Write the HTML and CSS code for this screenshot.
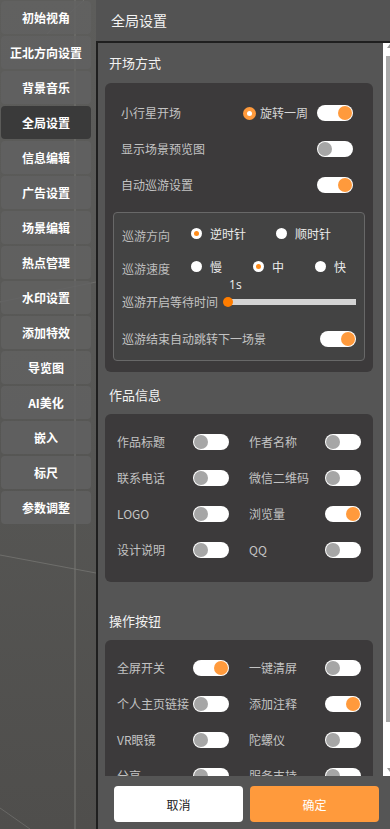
FILE: index.html
```html
<!DOCTYPE html>
<html lang="zh-CN">
<head>
<meta charset="utf-8">
<title>全局设置</title>
<link rel="stylesheet" href="styles.css">
</head>
<body>
<div class="app">
  <aside class="sidebar">
    <svg class="sidebar-bg" width="96" height="829" viewBox="0 0 96 829" xmlns="http://www.w3.org/2000/svg">
      <defs>
        <linearGradient id="bg" x1="0" y1="0" x2="0" y2="1">
          <stop offset="0" stop-color="#5d5d5b"/>
          <stop offset="0.5" stop-color="#575755"/>
          <stop offset="1" stop-color="#4f4e4c"/>
        </linearGradient>
      </defs>
      <rect width="96" height="829" fill="url(#bg)"/>
      <rect x="74" y="0" width="2" height="829" fill="#73736f" opacity="0.55"/>
      <line x1="47" y1="34" x2="84" y2="0" stroke="#7a7a77" stroke-width="1" opacity="0.6"/>
      <line x1="0" y1="302" x2="96" y2="282" stroke="#7a7a77" stroke-width="1" opacity="0.6"/>
      <line x1="0" y1="555" x2="96" y2="573" stroke="#7a7a77" stroke-width="1.2" opacity="0.7"/>
      <line x1="0" y1="808" x2="30" y2="829" stroke="#7a7a77" stroke-width="1" opacity="0.6"/>
    </svg>
    <nav class="menu">
      <div class="menu-item">初始视角</div>
      <div class="menu-item">正北方向设置</div>
      <div class="menu-item">背景音乐</div>
      <div class="menu-item active">全局设置</div>
      <div class="menu-item">信息编辑</div>
      <div class="menu-item">广告设置</div>
      <div class="menu-item">场景编辑</div>
      <div class="menu-item">热点管理</div>
      <div class="menu-item">水印设置</div>
      <div class="menu-item">添加特效</div>
      <div class="menu-item">导览图</div>
      <div class="menu-item">AI美化</div>
      <div class="menu-item">嵌入</div>
      <div class="menu-item">标尺</div>
      <div class="menu-item">参数调整</div>
    </nav>
  </aside>

  <section class="panel">
    <header class="panel-header">全局设置</header>
    <div class="panel-body">
      <div class="scroll-wrap">
        <div class="content">
          <h3 class="section-title s1">开场方式</h3>
          <div class="card card-open">
            <div class="row">
              <span class="label">小行星开场</span>
              <div class="row-right">
                <span class="radio-main"></span>
                <span class="opt-text main-opt">旋转一周</span>
                <span class="toggle on"><i></i></span>
              </div>
            </div>
            <div class="row">
              <span class="label">显示场景预览图</span>
              <span class="toggle"><i></i></span>
            </div>
            <div class="row">
              <span class="label">自动巡游设置</span>
              <span class="toggle on"><i></i></span>
            </div>

            <div class="cruise">
              <div class="c-row c-dir">
                <span class="c-label">巡游方向</span>
                <div class="opts">
                  <span class="opt wide"><span class="radio sel"></span><span class="opt-text">逆时针</span></span>
                  <span class="opt wide"><span class="radio"></span><span class="opt-text">顺时针</span></span>
                </div>
              </div>
              <div class="c-row c-speed">
                <span class="c-label">巡游速度</span>
                <div class="opts">
                  <span class="opt narrow"><span class="radio"></span><span class="opt-text">慢</span></span>
                  <span class="opt narrow"><span class="radio sel"></span><span class="opt-text">中</span></span>
                  <span class="opt narrow"><span class="radio"></span><span class="opt-text">快</span></span>
                </div>
              </div>
              <div class="c-row c-slider">
                <span class="label">巡游开启等待时间</span>
                <div class="slider">
                  <span class="slider-value">1s</span>
                  <span class="handle"></span>
                  <span class="track"></span>
                </div>
              </div>
              <div class="c-row c-end">
                <span class="label">巡游结束自动跳转下一场景</span>
                <span class="toggle on"><i></i></span>
              </div>
            </div>
          </div>

          <h3 class="section-title s2">作品信息</h3>
          <div class="card card-grid card-info">
            <div class="cell"><span class="label">作品标题</span><span class="toggle"><i></i></span></div>
            <div class="cell"><span class="label">作者名称</span><span class="toggle"><i></i></span></div>
            <div class="cell"><span class="label">联系电话</span><span class="toggle"><i></i></span></div>
            <div class="cell"><span class="label">微信二维码</span><span class="toggle"><i></i></span></div>
            <div class="cell"><span class="label">LOGO</span><span class="toggle"><i></i></span></div>
            <div class="cell"><span class="label">浏览量</span><span class="toggle on"><i></i></span></div>
            <div class="cell"><span class="label">设计说明</span><span class="toggle"><i></i></span></div>
            <div class="cell"><span class="label">QQ</span><span class="toggle"><i></i></span></div>
          </div>

          <h3 class="section-title s3">操作按钮</h3>
          <div class="card card-grid card-ops">
            <div class="cell"><span class="label">全屏开关</span><span class="toggle on"><i></i></span></div>
            <div class="cell"><span class="label">一键清屏</span><span class="toggle"><i></i></span></div>
            <div class="cell"><span class="label">个人主页链接</span><span class="toggle"><i></i></span></div>
            <div class="cell"><span class="label">添加注释</span><span class="toggle on"><i></i></span></div>
            <div class="cell"><span class="label">VR眼镜</span><span class="toggle"><i></i></span></div>
            <div class="cell"><span class="label">陀螺仪</span><span class="toggle"><i></i></span></div>
            <div class="cell"><span class="label">分享</span><span class="toggle"><i></i></span></div>
            <div class="cell"><span class="label">服务支持</span><span class="toggle"><i></i></span></div>
          </div>
        </div>
        <div class="scrollbar">
          <span class="sb-up"></span>
          <span class="sb-thumb"></span>
          <span class="sb-space"></span>
          <span class="sb-down"></span>
        </div>
      </div>
      <footer class="footer">
        <button class="btn btn-cancel">取消</button>
        <button class="btn btn-ok">确定</button>
      </footer>
    </div>
  </section>
</div>
</body>
</html>
```

FILE: styles.css
```css
* { box-sizing: border-box; }
html, body {
  margin: 0;
  padding: 0;
  width: 390px;
  height: 829px;
  overflow: hidden;
  background: #555555;
  font-family: "Noto Sans CJK SC", "Microsoft YaHei", "Noto Sans", sans-serif;
}
.app {
  display: flex;
  width: 390px;
  height: 829px;
}

/* ---------- sidebar ---------- */
.sidebar {
  position: relative;
  width: 96px;
  height: 829px;
  flex: none;
  overflow: hidden;
}
.sidebar-bg {
  position: absolute;
  left: 0;
  top: 0;
  display: block;
}
.menu {
  position: relative;
  display: flex;
  flex-direction: column;
  gap: 2px;
  padding: 1px 0 0 1px;
}
.menu-item {
  width: 90px;
  height: 33px;
  border-radius: 4px;
  background: rgba(98, 98, 97, 0.82);
  color: #ffffff;
  font-size: 12px;
  font-weight: 700;
  line-height: 33px;
  text-align: center;
  white-space: nowrap;
}
.menu-item.active {
  background: #3a3a3a;
}

/* ---------- panel ---------- */
.panel {
  flex: 1;
  display: flex;
  flex-direction: column;
  min-width: 0;
}
.panel-header {
  height: 41px;
  flex: none;
  background: #535353;
  color: #f4f4f4;
  font-size: 14px;
  line-height: 41px;
  padding-left: 15px;
}
.panel-body {
  flex: 1;
  display: flex;
  flex-direction: column;
  border-top: 2px solid #1f1f1f;
  border-left: 2px solid #1f1f1f;
  background: #555555;
  min-height: 0;
}
.scroll-wrap {
  flex: 1;
  display: flex;
  min-height: 0;
  overflow: hidden;
}
.content {
  flex: 1;
  min-width: 0;
  overflow: hidden;
  padding: 0 10px 0 7px;
}

.section-title {
  margin: 0;
  height: 20px;
  line-height: 20px;
  font-size: 13px;
  font-weight: 400;
  color: #f2f2f2;
  padding-left: 4px;
}
.section-title.s1 { margin-top: 10px; margin-bottom: 10px; }
.section-title.s2 { margin-top: 13px; margin-bottom: 9px; }
.section-title.s3 { margin-top: 29px; margin-bottom: 9px; }

.card {
  background: #3c3a3b;
  border-radius: 6px;
}
.card-open {
  padding: 12px 8px 11px;
}

.label {
  font-size: 12px;
  line-height: 16px;
  color: #c3c3c3;
  white-space: nowrap;
}

.row {
  height: 36px;
  display: flex;
  align-items: center;
  justify-content: space-between;
  padding: 0 12px 0 8px;
}
.row-right {
  display: flex;
  align-items: center;
}
.radio-main {
  width: 13px;
  height: 13px;
  border-radius: 50%;
  background: #ff9a3c;
  display: flex;
  align-items: center;
  justify-content: center;
}
.radio-main::after {
  content: "";
  width: 5px;
  height: 5px;
  border-radius: 50%;
  background: #ffffff;
}
.opt-text {
  font-size: 12px;
  line-height: 16px;
  color: #ececec;
  white-space: nowrap;
}
.main-opt {
  margin: 0 9px 0 4px;
  color: #d6d6d6;
}

/* toggle */
.toggle {
  display: flex;
  align-items: center;
  width: 36px;
  height: 16px;
  padding: 1px;
  border-radius: 8px;
  background: #ffffff;
  flex: none;
}
.toggle i {
  display: block;
  width: 14px;
  height: 14px;
  border-radius: 50%;
  background: #a6a6a6;
}
.toggle.on {
  justify-content: flex-end;
}
.toggle.on i {
  background: #ff9a3c;
}

/* cruise box */
.cruise {
  margin-top: 9px;
  border: 1px solid #686868;
  border-radius: 4px;
  background: #434343;
  padding: 6px 8px 1px 8px;
}
.c-row {
  display: flex;
  align-items: center;
}
.c-dir { height: 32px; }
.c-speed { height: 34px; }
.c-slider { height: 34px; }
.c-end { height: 40px; justify-content: space-between; }
.c-label {
  width: 69px;
  flex: none;
  font-size: 12px;
  line-height: 16px;
  color: #bdbdbd;
  padding-top: 2px;
}
.opts {
  display: flex;
  align-items: center;
}
.opt {
  display: flex;
  align-items: center;
  gap: 8px;
}
.opt.wide { width: 85px; }
.opt.narrow { width: 62px; }
.radio {
  width: 11px;
  height: 11px;
  border-radius: 50%;
  background: #ffffff;
  display: flex;
  align-items: center;
  justify-content: center;
  flex: none;
}
.radio.sel::after {
  content: "";
  width: 5px;
  height: 5px;
  border-radius: 50%;
  background: #ff8c1a;
}
.c-dir .opts, .c-speed .opts { margin-top: -3px; }

.slider {
  position: relative;
  flex: 1;
  display: flex;
  align-items: center;
  margin-left: 5px;
}
.handle {
  width: 10px;
  height: 10px;
  border-radius: 50%;
  background: #ff7d00;
  position: relative;
  z-index: 1;
  flex: none;
}
.track {
  flex: 1;
  height: 6px;
  margin-left: -3px;
  background: #d4d4d4;
}
.slider-value {
  position: absolute;
  left: 6px;
  top: -19px;
  font-size: 12px;
  line-height: 14px;
  color: #f0f0f0;
  font-family: "Open Sans", "Noto Sans", sans-serif;
}

/* grid cards */
.card-grid {
  display: grid;
  grid-template-columns: 112px 112px;
  column-gap: 20px;
  grid-auto-rows: 36px;
  padding: 10px 12px 14px;
}
.cell {
  display: flex;
  align-items: center;
  justify-content: space-between;
}

/* scrollbar */
.scrollbar {
  width: 7px;
  flex: none;
  background: #ffffff;
  display: flex;
  flex-direction: column;
  padding-left: 3px;
}
.sb-up {
  width: 0;
  height: 0;
  margin-top: 1px;
  margin-left: 1px;
  border-left: 3px solid transparent;
  border-bottom: 4px solid #9a9a9a;
  margin-bottom: 4px;
}
.sb-thumb {
  height: 666px;
  background: #a9a9a9;
  margin-top: 4px;
}
.sb-space { flex: 1; }
.sb-down {
  width: 0;
  height: 0;
  margin-left: 1px;
  border-left: 3px solid transparent;
  border-top: 4px solid #9a9a9a;
  margin-bottom: 4px;
}

/* footer */
.footer {
  height: 53px;
  flex: none;
  display: flex;
  gap: 7px;
  padding: 10px 11px 7px 16px;
  background: #555555;
}
.btn {
  flex: 1;
  height: 36px;
  border: none;
  border-radius: 4px;
  font-family: "Noto Sans CJK SC", "Microsoft YaHei", sans-serif;
  font-size: 12px;
  cursor: pointer;
}
.btn-cancel {
  background: #ffffff;
  color: #222222;
}
.btn-ok {
  background: #ff9a3c;
  color: #ffffff;
}
```
